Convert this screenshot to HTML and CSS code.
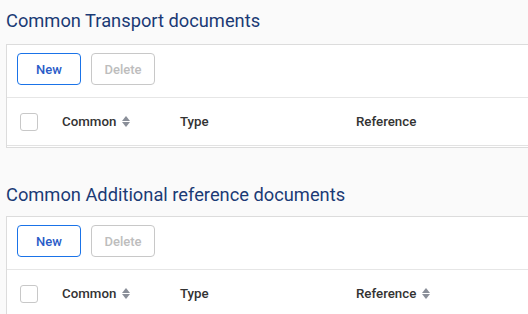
FILE: index.html
```html
<!DOCTYPE html>
<html>
<head>
<meta charset="utf-8">
<link rel="stylesheet" href="styles.css">
</head>
<body>
  <section class="section first">
    <h2 class="title">Common Transport documents</h2>
    <div class="card">
      <div class="toolbar">
        <button class="btn btn-primary">New</button>
        <button class="btn btn-disabled">Delete</button>
      </div>
      <div class="header-row">
        <div class="cell cell-check"><span class="checkbox"></span></div>
        <div class="cell cell-common">Common <span class="sort"><i class="up"></i><i class="down"></i></span></div>
        <div class="cell cell-type">Type</div>
        <div class="cell cell-ref">Reference</div>
      </div>
    </div>
  </section>
  <section class="section second">
    <h2 class="title">Common Additional reference documents</h2>
    <div class="card">
      <div class="toolbar">
        <button class="btn btn-primary">New</button>
        <button class="btn btn-disabled">Delete</button>
      </div>
      <div class="header-row">
        <div class="cell cell-check"><span class="checkbox"></span></div>
        <div class="cell cell-common">Common <span class="sort"><i class="up"></i><i class="down"></i></span></div>
        <div class="cell cell-type">Type</div>
        <div class="cell cell-ref">Reference <span class="sort"><i class="up"></i><i class="down"></i></span></div>
      </div>
    </div>
  </section>
</body>
</html>
```
FILE: styles.css
```css
html, body {
  margin: 0;
  padding: 0;
  background: #fafafa;
  overflow: hidden;
  font-family: Roboto, "Liberation Sans", sans-serif;
}
body {
  width: 528px;
  height: 314px;
}
.section {
  padding-left: 6px;
}
.section.first {
  padding-top: 9px;
}
.section.second {
  padding-top: 35px;
}
.title {
  margin: 0;
  font-size: 18.3px;
  font-weight: 400;
  line-height: 24px;
  color: #1b3a75;
  height: 35px;
}
.second .title {
  height: 33px;
}
.card {
  width: 640px;
  background: #fff;
  border: 1px solid #dcdcdc;
  box-sizing: border-box;
}
.toolbar {
  display: flex;
  gap: 10px;
  padding: 8px 10px 12px 10px;
  border-bottom: 1px solid #e6e6e6;
}
.btn {
  width: 64px;
  height: 32px;
  box-sizing: border-box;
  border-radius: 4px;
  background: #fff;
  font-family: Roboto, "Liberation Sans", sans-serif;
  font-size: 13px;
  font-weight: 500;
  padding: 0;
}
.btn-primary {
  border: 1px solid #1a73e8;
  color: #2a5cc8;
}
.btn-disabled {
  border: 1px solid #c8c8c8;
  color: #bdbdbd;
}
.header-row {
  display: flex;
  align-items: center;
  height: 47px;
  border-bottom: 1px solid #e2e2e2;
  margin-bottom: 1px;
  font-size: 13.3px;
  font-weight: 500;
  color: #333;
}
.cell {
  display: flex;
  align-items: center;
}
.cell-check {
  width: 55px;
  padding-left: 13px;
  box-sizing: border-box;
}
.checkbox {
  width: 18px;
  height: 18px;
  border: 1px solid #c8c8c8;
  border-radius: 3px;
  box-sizing: border-box;
  background: #fff;
}
.cell-common {
  width: 118px;
}
.cell-type {
  width: 176px;
}
.sort {
  display: inline-flex;
  flex-direction: column;
  gap: 1px;
  margin-left: 6px;
}
.sort i {
  display: block;
  width: 0;
  height: 0;
  border-left: 4px solid transparent;
  border-right: 4px solid transparent;
}
.sort .up {
  border-bottom: 5px solid #8a8f99;
}
.sort .down {
  border-top: 5px solid #8a8f99;
}
```
